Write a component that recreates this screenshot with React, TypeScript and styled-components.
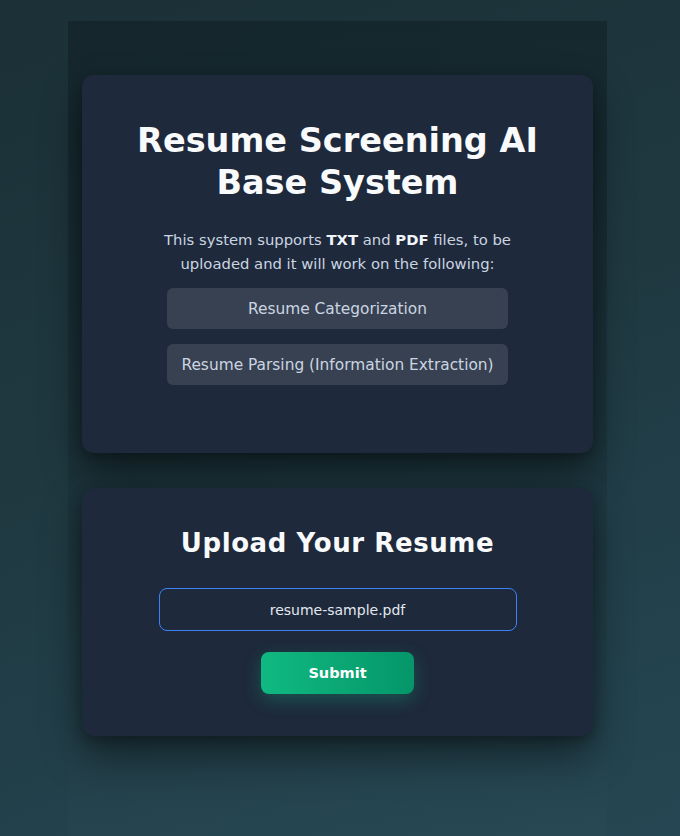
import React from "react";
import styled, { createGlobalStyle } from "styled-components";

const GlobalStyle = createGlobalStyle`
  html, body {
    margin: 0;
    padding: 0;
  }
  body {
    min-height: 100vh;
    background: #244551;
    font-family: "DejaVu Sans", "Open Sans", sans-serif;
    color: #f1f5f9;
  }
`;

const Page = styled.div`
  min-height: 100vh;
  padding: 21px 5px 0 0;
  box-sizing: border-box;
  background: linear-gradient(160deg, #1b3037 0%, #1f3840 45%, #254753 100%);
`;

const Container = styled.main`
  width: 539px;
  min-height: calc(100vh - 21px);
  margin: 0 auto;
  padding: 54px 14px 40px;
  box-sizing: border-box;
  display: flex;
  flex-direction: column;
  gap: 35px;
  background: linear-gradient(180deg, rgba(8, 18, 22, 0.35) 0%, rgba(8, 18, 22, 0.12) 60%, rgba(255, 255, 255, 0.01) 100%);
`;

const Card = styled.section<{ $pad: string }>`
  background: #1e293b;
  border-radius: 12px;
  padding: ${(p) => p.$pad};
  box-shadow: 0 20px 40px rgba(0, 0, 0, 0.45), 0 4px 12px rgba(0, 0, 0, 0.25);
  display: flex;
  flex-direction: column;
  align-items: center;
  text-align: center;
`;

const Title = styled.h1`
  margin: 0;
  font-size: 33.5px;
  line-height: 42px;
  font-weight: 700;
  color: #f8fafc;
  max-width: 430px;
`;

const Intro = styled.p`
  margin: 24px 0 12px;
  font-size: 14.8px;
  line-height: 24px;
  color: #cbd5e1;
  max-width: 370px;

  strong {
    color: #f1f5f9;
    font-weight: 700;
  }
`;

const FeatureList = styled.ul`
  list-style: none;
  margin: 0;
  padding: 0;
  display: flex;
  flex-direction: column;
  gap: 15px;
  width: 341px;
`;

const Feature = styled.li`
  background: #374151;
  border-radius: 6px;
  height: 41px;
  display: flex;
  align-items: center;
  justify-content: center;
  font-size: 15.4px;
  color: #cbd5e1;
  white-space: nowrap;
`;

const Subtitle = styled.h2`
  margin: 0;
  font-size: 26px;
  line-height: 32px;
  font-weight: 700;
  letter-spacing: 0.6px;
  color: #f8fafc;
`;

const FileBox = styled.div`
  margin-top: 29px;
  width: 358px;
  height: 43px;
  box-sizing: border-box;
  border: 1.5px solid #3b82f6;
  border-radius: 8px;
  display: flex;
  align-items: center;
  justify-content: center;
  font-size: 14px;
  color: #e2e8f0;
`;

const SubmitButton = styled.button`
  margin-top: 21px;
  width: 153px;
  height: 42px;
  border: none;
  border-radius: 8px;
  background: linear-gradient(90deg, #10b981 0%, #059669 100%);
  color: #ffffff;
  font-family: inherit;
  font-size: 14.5px;
  font-weight: 700;
  box-shadow: 0 6px 18px rgba(16, 185, 129, 0.3);
  cursor: pointer;
`;

export default function App() {
  return (
    <>
      <GlobalStyle />
      <Page>
        <Container>
          <Card $pad="45px 20px 68px">
            <Title>Resume Screening AI Base System</Title>
            <Intro>
              This system supports <strong>TXT</strong> and <strong>PDF</strong> files, to be uploaded
              and it will work on the following:
            </Intro>
            <FeatureList>
              <Feature>Resume Categorization</Feature>
              <Feature>Resume Parsing (Information Extraction)</Feature>
            </FeatureList>
          </Card>
          <Card $pad="39px 20px 42px">
            <Subtitle>Upload Your Resume</Subtitle>
            <FileBox>resume-sample.pdf</FileBox>
            <SubmitButton type="button">Submit</SubmitButton>
          </Card>
        </Container>
      </Page>
    </>
  );
}
